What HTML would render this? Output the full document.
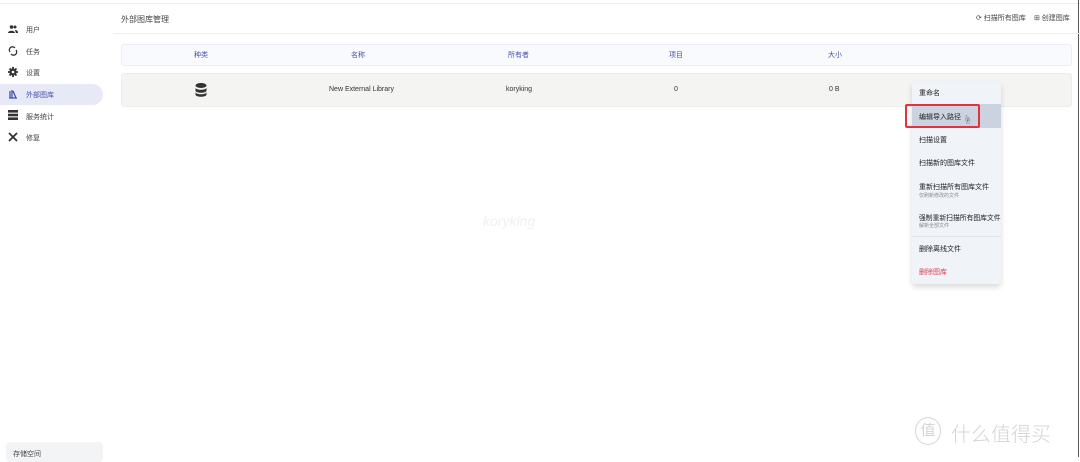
<!DOCTYPE html>
<html><head><meta charset="utf-8"><style>
*{margin:0;padding:0;box-sizing:border-box}
body{width:1080px;height:457px;background:#fff;font-family:"Liberation Sans","Noto Sans CJK SC",sans-serif;position:relative;overflow:hidden;color:#333}
.a{position:absolute;white-space:nowrap}
.nav{font-size:7px;color:#444}
.th{font-size:7px;color:#4250af}
.td{font-size:7px;color:#333}
.mi{font-size:7px;color:#222;left:919px}
.sub{font-size:5px;color:#888;left:919px}
</style></head><body>
<div class="a" style="left:0;top:3px;width:1080px;height:1px;background:#eee"></div>
<div class="a" style="left:1078px;top:0;width:1px;height:457px;background:#555"></div>
<div class="a" style="left:0;top:84px;width:103px;height:21px;background:#e8e9f6;border-radius:0 11px 11px 0"></div>
<svg class="a" style="left:8px;top:24px" width="10" height="10" viewBox="0 0 10 10"><circle cx="3.5" cy="3" r="1.8" fill="#333"/><circle cx="7" cy="3" r="1.5" fill="#333"/><path d="M0 9c0-3 7-3 7 0z M7 6c2 0 3 1 3 3h-2z" fill="#333"/></svg>
<div class="a nav" style="left:26px;top:25px">用户</div>
<svg class="a" style="left:8px;top:46px" width="10" height="10" viewBox="0 0 10 10"><path d="M2 6a3 3 0 0 1 5-4M8 4a3 3 0 0 1-5 4" stroke="#333" stroke-width="1.3" fill="none"/></svg>
<div class="a nav" style="left:26px;top:47px">任务</div>
<svg class="a" style="left:8px;top:67px" width="10" height="10" viewBox="0 0 10 10"><circle cx="5" cy="5" r="3.6" fill="#333"/><path d="M5 0v10M0 5h10M1.5 1.5l7 7M8.5 1.5l-7 7" stroke="#333" stroke-width="1.8"/><circle cx="5" cy="5" r="1.3" fill="#fff"/></svg>
<div class="a nav" style="left:26px;top:68px">设置</div>
<svg class="a" style="left:8px;top:89px" width="10" height="10" viewBox="0 0 10 10"><path d="M1 9h8M2 9V2M4 9V1M5 2l3 7" stroke="#4250af" stroke-width="1.3" fill="none"/></svg>
<div class="a nav" style="left:26px;top:90px;color:#4250af">外部图库</div>
<svg class="a" style="left:8px;top:110px" width="10" height="10" viewBox="0 0 10 10"><rect x="0" y="0" width="10" height="2.6" fill="#333"/><rect x="0" y="3.7" width="10" height="2.6" fill="#333"/><rect x="0" y="7.4" width="10" height="2.6" fill="#333"/></svg>
<div class="a nav" style="left:26px;top:112px">服务统计</div>
<svg class="a" style="left:8px;top:132px" width="10" height="10" viewBox="0 0 10 10"><path d="M1 1l8 8M9 1L1 9" stroke="#333" stroke-width="1.8"/></svg>
<div class="a nav" style="left:26px;top:133px">修复</div>
<div class="a" style="left:6px;top:442px;width:97px;height:20px;background:#f3f4f5;border-radius:4px"></div>
<div class="a nav" style="left:13px;top:449px">存储空间</div>
<div class="a" style="left:121px;top:14px;font-size:8px;color:#444">外部图库管理</div>
<div class="a" style="left:113px;top:33px;width:967px;height:1px;background:#eee"></div>
<div class="a" style="left:976px;top:13px;font-size:7px;color:#444">⟳ 扫描所有图库</div>
<div class="a" style="left:1034px;top:13px;font-size:7px;color:#444">⊞ 创建图库</div>
<div class="a" style="left:121px;top:44px;width:951px;height:22px;background:#f9fafd;border:1px solid #eceef4;border-radius:3px"></div>
<div class="a th" style="left:194px;top:50px">种类</div>
<div class="a th" style="left:351px;top:50px">名称</div>
<div class="a th" style="left:508px;top:50px">所有者</div>
<div class="a th" style="left:669px;top:50px">项目</div>
<div class="a th" style="left:828px;top:50px">大小</div>
<div class="a" style="left:121px;top:73px;width:951px;height:34px;background:#f4f4f3;border:1px solid #ececec;border-radius:3px"></div>
<svg class="a" style="left:195px;top:83px" width="12" height="14" viewBox="0 0 12 14"><ellipse cx="6" cy="2.5" rx="5.5" ry="2.5" fill="#333"/><path d="M.5 4.5c0 3 11 3 11 0v3c0 3-11 3-11 0z M.5 9c0 3 11 3 11 0v2.5c0 3-11 3-11 0z" fill="#333"/></svg>
<div class="a td" style="left:329px;top:86px">New External Library</div>
<div class="a td" style="left:506px;top:86px">koryking</div>
<div class="a td" style="left:674px;top:86px">0</div>
<div class="a td" style="left:829px;top:86px">0 B</div>
<div class="a" style="left:483px;top:213px;font-size:14px;color:#f0f0f0;font-style:italic">koryking</div>
<div class="a" style="left:912px;top:82px;width:89px;height:202px;background:#f0f3f8;border-radius:3px;box-shadow:0 3px 6px rgba(0,0,0,.15)"></div>
<div class="a" style="left:912px;top:104px;width:89px;height:24px;background:#cbd3e0"></div>
<div class="a" style="left:912px;top:236px;width:89px;height:1px;background:#e2e5ea"></div>
<div class="a" style="left:905px;top:104px;width:75px;height:24px;border:2px solid #e0333f;border-radius:2px"></div>
<div class="a mi" style="top:88px">重命名</div>
<div class="a mi" style="top:112px">编辑导入路径</div>
<div class="a" style="left:963px;top:113px;font-size:9px;color:#666">☝</div>
<div class="a mi" style="top:135px">扫描设置</div>
<div class="a mi" style="top:158px">扫描新的图库文件</div>
<div class="a mi" style="top:182px">重新扫描所有图库文件</div>
<div class="a sub" style="top:192px">仅刷新修改的文件</div>
<div class="a mi" style="top:212px;font-size:6.8px">强制重新扫描所有图库文件</div>
<div class="a sub" style="top:222px">解新全部文件</div>
<div class="a mi" style="top:244px">删除离线文件</div>
<div class="a mi" style="top:267px;color:#e0404f">删除图库</div>
<div class="a" style="left:915px;top:417px;width:26px;height:28px;border:1px solid #d4d4d4;border-radius:50%;font-size:15px;color:#d4d4d4;text-align:center;line-height:26px">值</div>
<div class="a" style="left:951px;top:418px;font-size:20px;color:#d4d4d4;font-weight:300">什么值得买</div>
</body></html>
